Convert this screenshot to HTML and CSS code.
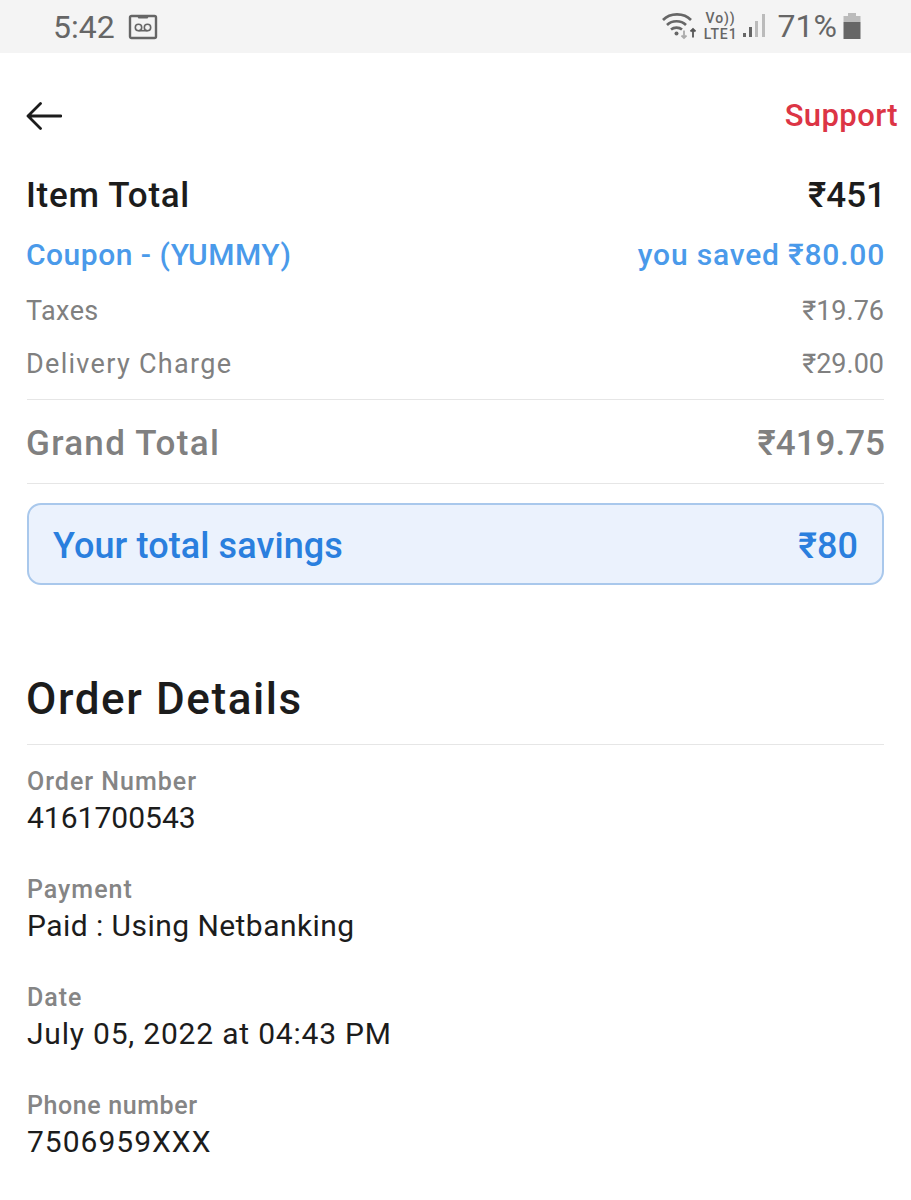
FILE: index.html
```html
<!DOCTYPE html>
<html lang="en">
<head>
  <meta charset="UTF-8">
  <title>Order Summary</title>
  <link rel="stylesheet" href="styles.css">
</head>
<body>
  <div class="status-bar">
    <div class="status-left">
      <span class="time">5:42</span>
      <svg class="tape-icon" width="30" height="26" viewBox="0 0 30 26">
        <rect x="2" y="2" width="26" height="22" rx="1.5" fill="none" stroke="#666" stroke-width="2.4"/>
        <path d="M9 2h12l-1.5 2.5h-9z" fill="#666"/>
        <circle cx="10.5" cy="13.5" r="3.2" fill="none" stroke="#666" stroke-width="1.6"/>
        <circle cx="19.5" cy="13.5" r="3.2" fill="none" stroke="#666" stroke-width="1.6"/>
        <path d="M10.5 16.7h9" stroke="#666" stroke-width="1.6"/>
      </svg>
    </div>
    <div class="status-right">
      <svg class="wifi-icon" width="36" height="28" viewBox="0 0 36 28">
        <path d="M1 8C8 .5 22 .5 29 8" fill="none" stroke="#666" stroke-width="2.6"/>
        <path d="M5 13C10 8 19 8 24 13" fill="none" stroke="#666" stroke-width="2.6"/>
        <path d="M9 17.500C12 15 17 15 20 17.500" fill="none" stroke="#666" stroke-width="2.6"/>
        <circle cx="14.500" cy="21.500" r="2" fill="#666"/>
        <path d="M22 18.500v7.500M19.500 23.500l2.500 2.500 2.500-2.500" fill="none" stroke="#aaa" stroke-width="1.800"/>
        <path d="M31 25.500v-8.500M28.500 19.500l2.500-2.500 2.500 2.500" fill="none" stroke="#555" stroke-width="1.800"/>
      </svg>
      <div class="volte">Vo))<br>LTE1</div>
      <svg class="signal-icon" width="24" height="28" viewBox="0 0 24 28">
        <rect x="1" y="21" width="3" height="4" fill="#666"/>
        <rect x="7" y="15" width="3" height="10" fill="#666"/>
        <rect x="13" y="9" width="3" height="16" fill="#bbb"/>
        <rect x="20" y="2" width="3" height="23" fill="#bbb"/>
      </svg>
      <span class="battery-text">71%</span>
      <svg class="battery-icon" width="18" height="28" viewBox="0 0 18 28">
        <path d="M5 1h8v3h4.500v6H.5V4H5z" fill="#bbb"/>
        <rect x="0.500" y="10" width="17" height="17" fill="#666"/>
      </svg>
    </div>
  </div>

  <div class="page">
    <div class="top-row">
      <svg class="back-icon" width="36" height="30" viewBox="0 0 36 30">
        <path d="M2 15h33M14.500 2.500L2 15l12.500 12.500" fill="none" stroke="#1c1c1c" stroke-width="2.800" stroke-linecap="round" stroke-linejoin="round"/>
      </svg>
      <span class="support">Support</span>
    </div>

    <div class="row row-item">
      <span class="label">Item Total</span>
      <span>₹451</span>
    </div>
    <div class="row row-coupon">
      <span class="label">Coupon - (YUMMY)</span>
      <span class="label saved">you saved ₹80.00</span>
    </div>
    <div class="row row-small">
      <span class="label label-short">Taxes</span>
      <span>₹19.76</span>
    </div>
    <div class="row row-small">
      <span class="label">Delivery Charge</span>
      <span>₹29.00</span>
    </div>
    <div class="row row-grand">
      <span class="label">Grand Total</span>
      <span>₹419.75</span>
    </div>
    <div class="savings">
      <span class="savings-label">Your total savings</span>
      <span>₹80</span>
    </div>

    <h2 class="section-title">Order Details</h2>

    <div class="detail">
      <div class="detail-label">Order Number</div>
      <div class="detail-value">4161700543</div>
    </div>
    <div class="detail">
      <div class="detail-label">Payment</div>
      <div class="detail-value spaced">Paid : Using Netbanking</div>
    </div>
    <div class="detail">
      <div class="detail-label">Date</div>
      <div class="detail-value spaced-wide">July 05, 2022 at 04:43 PM</div>
    </div>
    <div class="detail">
      <div class="detail-label phone-label">Phone number</div>
      <div class="detail-value phone-value">7506959XXX</div>
    </div>
  </div>
</body>
</html>
```

FILE: styles.css
```css
body {
  margin: 0;
  background: #fff;
  font-family: "Roboto", "Noto Sans", sans-serif;
  color: #1c1c1c;
}

/* Status bar */
.status-bar {
  height: 53px;
  background: #f4f4f4;
  display: flex;
  justify-content: space-between;
  align-items: center;
  padding: 0 50px 0 53px;
  color: #666;
}

.status-left, .status-right {
  display: flex;
  align-items: center;
}

.time {
  font-size: 32px;
  margin-right: 13px;
}

.status-right {
  margin-top: -1px;
}

.wifi-icon {
  margin-left: -2px;
}

.volte {
  width: 34px;
  text-align: center;
  font-size: 14px;
  line-height: 16.5px;
  font-weight: 500;
  letter-spacing: 0.9px;
  margin: 0 4px 0 6px;
}

.battery-text {
  font-size: 32px;
  margin: 0 6px 0 12px;
}

/* Main content */
.page {
  padding: 0 27px;
}

.top-row {
  display: flex;
  justify-content: space-between;
  align-items: center;
  height: 125px;
}

.back-icon {
  margin-left: -1px;
}

.support {
  color: #dc3545;
  font-size: 31px;
  font-weight: 500;
  letter-spacing: 0.4px;
  margin-right: -14px;
}

.row {
  display: flex;
  justify-content: space-between;
  align-items: center;
}

.row span:first-child {
  margin-left: -1px;
}

.row-item {
  font-size: 35px;
  font-weight: 500;
  height: 34px;
}

.row-item .label {
  letter-spacing: 0.7px;
}

.row-item span:last-child {
  margin-right: -2px;
}

.row-coupon {
  font-size: 30px;
  font-weight: 500;
  color: #4a9aea;
  height: 40px;
  margin-top: 22px;
}

.row-coupon .label {
  letter-spacing: 0.5px;
}

.row-coupon .saved {
  letter-spacing: 0.8px;
  margin-right: -1px;
}

.row-small {
  font-size: 27px;
  color: #808080;
  height: 36px;
  margin-top: 17px;
}

.row-coupon + .row-small {
  margin-top: 19px;
}

.row-small .label {
  letter-spacing: 1.3px;
}

.row-small .label-short {
  letter-spacing: 0.4px;
}

.row-grand {
  box-sizing: border-box;
  font-size: 35px;
  font-weight: 500;
  color: #808080;
  height: 85px;
  padding-top: 4px;
  margin-top: 17px;
  border-top: 1px solid #e6e6e6;
  border-bottom: 1px solid #e6e6e6;
}

.row-grand .label {
  letter-spacing: 1.3px;
}

.row-grand span:last-child {
  margin-right: -1px;
}

.savings {
  box-sizing: border-box;
  display: flex;
  justify-content: space-between;
  align-items: center;
  height: 82px;
  margin-top: 19px;
  padding: 4px 24px 0 24px;
  background: #ebf2fd;
  border: 2px solid #a9c8ec;
  border-radius: 14px;
  color: #2a7fde;
  font-size: 36px;
  font-weight: 500;
}

.savings-label {
  letter-spacing: 0.1px;
}

.section-title {
  margin: 89px 0 0 0;
  padding-bottom: 20px;
  border-bottom: 1px solid #e6e6e6;
  font-size: 44px;
  line-height: 50px;
  font-weight: 500;
  letter-spacing: 1.6px;
  text-indent: -1px;
}

.detail {
  margin-top: 20px;
  margin-bottom: 36px;
}

.detail-label {
  font-size: 25px;
  font-weight: 500;
  line-height: 34px;
  letter-spacing: 1px;
  color: #858585;
}

.detail-value {
  font-size: 30px;
  line-height: 38px;
}

.spaced {
  letter-spacing: 0.45px;
}

.spaced-wide {
  letter-spacing: 0.8px;
}

.phone-label {
  letter-spacing: 0.6px;
}

.phone-value {
  letter-spacing: 1px;
}
```
